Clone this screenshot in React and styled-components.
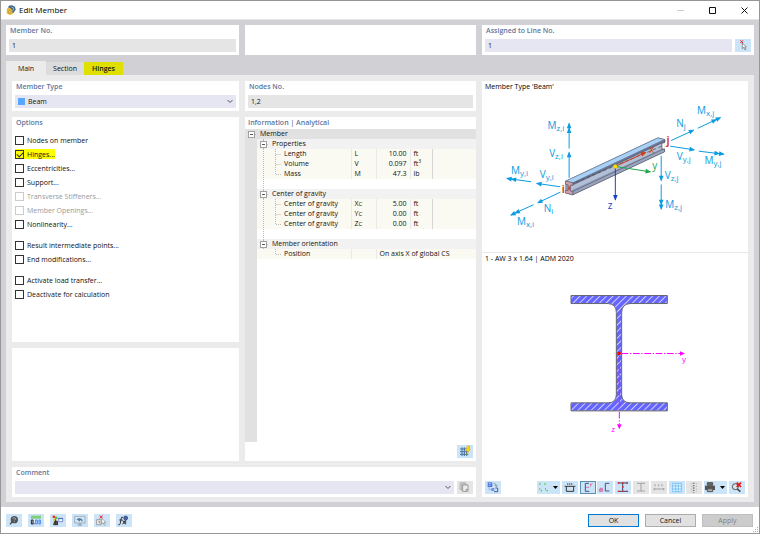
import React, { useState } from 'react';
import styled, { createGlobalStyle, css } from 'styled-components';

const GlobalStyle = createGlobalStyle`
    * {
        box-sizing: border-box;
    }
    body {
        margin: 0;
        background: white;
    }
    body, button, input, select, table {
        font-family: "Open Sans", "Noto Sans", sans-serif;
        font-size: 7px;
        font-weight: 500;
        color: #111111;
    }
`;

const Window = styled.div`
    display: flex;
    flex-direction: column;
    min-height: 100vh;
    border: 1px solid #969696;
    background: white;
`;

const TitleBar = styled.header`
    display: flex;
    align-items: center;
    height: 19px;
    padding: 0 5px;
    gap: 3px;
    border-bottom: 1px solid #e4e4e4;
`;

const Title = styled.h1`
    flex: 1;
    margin: 0;
    font-size: 8px;
    line-height: 10px;
    font-weight: 400;
    color: black;
`;

const WindowButton = styled.button`
    display: flex;
    justify-content: center;
    width: 29px;
    padding: 0;
    border: none;
    background: none;
    &:last-child {
        margin-right: -5px;
    }
`;

const Body = styled.main`
    display: flex;
    flex-direction: column;
    flex: 1;
    padding: 5px;
    background: #d0d0d5;
`;

const TopRow = styled.div`
    display: grid;
    grid-template-columns: 233fr 231fr 272fr;
    gap: 6px;
`;

const Card = styled.section`
    display: flex;
    flex-direction: column;
    min-width: 0;
    min-height: 30px;
    padding: 0 3px 3px 3px;
    background: white;
`;

const Caption = styled.label`
    display: block;
    height: 14px;
    line-height: 12px;
    margin: 0 0 0 ${props => props.$indent ? "3px" : "1px"};
    font-size: 7px;
    font-weight: 600;
    color: #62759c;
`;

const FieldRow = styled.div`
    display: flex;
    gap: 3px;
`;

const Field = styled.div`
    display: flex;
    align-items: center;
    flex: 1;
    min-width: 0;
    height: 13px;
    padding: 0 3px;
    gap: 3px;
    background: ${props => props.$locked ? "#e5e5e5" : "#e6e6f2"};
`;

const TextInput = styled.input`
    flex: 1;
    min-width: 0;
    padding: 0;
    border: none;
    outline-style: none;
    background: transparent;
`;

const Select = styled.select`
    flex: 1;
    min-width: 0;
    padding: 0;
    border: none;
    outline-style: none;
    appearance: none;
    background: transparent;
`;

const Swatch = styled.span`
    width: 7px;
    height: 7px;
    background: #55aaff;
`;

const PlainButton = styled.button`
    display: flex;
    padding: 0;
    border: none;
    background: none;
`;

const Tabs = styled.nav`
    display: flex;
    align-items: flex-end;
    height: 20px;
`;

const Tab = styled.button`
    height: ${props => props.$active ? "14px" : "13px"};
    padding: 0;
    width: ${props => props.$active ? "40px" : "38px"};
    border: none;
    background: ${props => props.$marked ? "#e0e000" : props.$active ? "#ebebeb" : "#dcdcdc"};
    ${props => props.$marked && css`
        width: 39px;
        font-weight: 600;
    `}
`;

const Panel = styled.div`
    display: grid;
    flex: 1;
    grid-template-columns: 227fr 231fr 266fr;
    grid-template-rows: 30px 225fr 113fr 30px;
    gap: 6px;
    padding: 6px 6px 5px;
    background: #ebebeb;
`;

const InfoCard = styled(Card)`
    grid-row: 2 / 4;
    grid-column: 2;
    padding: 0;
`;

const CommentCard = styled(Card)`
    grid-row: 4;
    grid-column: 1 / 3;
`;

const PreviewCard = styled(Card)`
    grid-row: 1 / 5;
    grid-column: 3;
    padding: 0;
`;

const OptionList = styled.div`
    display: flex;
    flex-direction: column;
    gap: 7px;
    padding-top: 2px;
`;

const OptionGroup = styled.div`
    display: flex;
    flex-direction: column;
    align-items: flex-start;
`;

const Option = styled.label`
    display: flex;
    align-items: center;
    height: 10px;
    margin: 2px 0;
    gap: 3px;
    color: ${props => props.$disabled ? "#999999" : "#111111"};
    background: ${props => props.$marked ? "#ffff00" : "transparent"};
`;

const CheckBox = styled.input`
    appearance: none;
    display: flex;
    justify-content: center;
    width: 9px;
    height: 9px;
    margin: 0;
    border: 1px solid #333333;
    &:disabled {
        border-color: #cccccc;
    }
    &:checked::after {
        content: "";
        width: 3px;
        height: 5px;
        border: solid #333333;
        border-width: 0 1px 1px 0;
        transform: rotate(45deg);
    }
`;

const TreeArea = styled.div`
    flex: 1;
    margin-top: -2px;
    background: linear-gradient(to right, #e1e1e1 12px, white 12px);
`;

const Tree = styled.table`
    width: 100%;
    table-layout: fixed;
    border-collapse: collapse;
    td, th {
        height: 10px;
        padding: 0;
        line-height: 10px;
        font-weight: 500;
        text-align: left;
        white-space: nowrap;
    }
`;

const RootRow = styled.tr`
    background: #e1e1e1;
`;

const GroupCell = styled.th`
    background: #f2f2f2;
`;

const NameCell = styled.th`
    background: #fafaf3;
`;

const ValueCell = styled.td`
    background: #fafaf3;
    border-left: ${props => props.$open ? "none" : "1px solid #e9e9e6"};
    ${props => props.$unit && css`
        border-right: 1px solid #d4d4d4;
    `}
`;

const CellText = styled.span`
    display: block;
    height: 10px;
    padding: 0 3px;
    text-align: ${props => props.$right ? "right" : "left"};
`;

const NameLine = styled.span`
    display: flex;
    align-items: center;
    height: 10px;
`;

const NameText = styled.span`
    padding-left: 3px;
`;

const Power = styled.sup`
    font-size: 5px;
    line-height: 0;
`;

const Small = styled.small`
    font-size: 6px;
`;

const Toggle = styled.button`
    display: flex;
    width: 12px;
    height: 10px;
    padding: 0;
    border: none;
    background: none;
`;

const InfoFooter = styled.div`
    display: flex;
    justify-content: flex-end;
    padding: 3px;
`;

const ToolButton = styled.button`
    display: flex;
    align-items: center;
    width: ${props => props.$menu ? "23px" : "16px"};
    height: 13px;
    padding: 0;
    border: none;
    background: ${props => props.disabled ? "#e5e5e5" : "#cce4f7"};
    ${props => props.$pressed && css`
        outline: 1px solid #5b8db5;
        outline-offset: -1px;
    `}
`;

const View = styled.div`
    display: flex;
    flex-direction: column;
    flex: ${props => props.$grow} 1 0;
    min-height: 0;
    & + & {
        border-top: 1px solid #e8e8e8;
    }
`;

const ViewTitle = styled.div`
    height: 12px;
    padding-left: 3px;
    line-height: 12px;
    color: black;
`;

const Drawing = styled.svg`
    flex: 1;
    width: 100%;
    min-height: 0;
    font-family: "Open Sans", "Noto Sans", sans-serif;
`;

const ViewTools = styled.div`
    display: flex;
    justify-content: space-between;
    padding: 3px;
`;

const ToolGroup = styled.div`
    display: flex;
    justify-content: space-between;
    width: 208px;
`;

const Footer = styled.footer`
    display: flex;
    align-items: center;
    justify-content: space-between;
    height: 26px;
    padding: 0 6px 0 5px;
`;

const FooterGroup = styled.div`
    display: flex;
    gap: 6px;
`;

const DialogButton = styled.button`
    width: 51px;
    height: 13px;
    padding: 0;
    border: 1px solid #adadad;
    background: #e1e1e1;
    ${props => props.$primary && css`
        border-color: #0078d7;
    `}
    &:disabled {
        border-color: #bfbfbf;
        background: #cccccc;
        color: #838383;
    }
`;

const Grip = styled.span`
    position: absolute;
    right: 1px;
    bottom: 1px;
    display: flex;
`;

// icons are drawn on a 48 x 39 grid
function Icon(props){
    return(
        <svg width="16" height="13" viewBox="0 0 48 39" fill="none" stroke="#333" strokeWidth="3" aria-hidden="true">
            {props.children}
        </svg>
    )
}

function Chevron(){
    return(
        <svg width="6" height="5" viewBox="0 0 6 5" fill="none" stroke="#555" aria-hidden="true">
            <path d="M0.5 1 L3 3.5 L5.5 1" />
        </svg>
    )
}

function DropArrow(){
    return(
        <svg width="5" height="3" viewBox="0 0 5 3" aria-hidden="true">
            <path d="M0 0 H5 L2.5 3 Z" fill="black" />
        </svg>
    )
}

function PlusMinus(props){
    return(
        <Toggle aria-label={"Collapse " + props.name}>
            <svg width="12" height="10" viewBox="0 0 12 10" fill="none" stroke="#a0a0a0">
                {props.root ? null : <path d="M6.5 0 V2 M6.5 9 V10" stroke="#bbb" />}
                <path d="M10 5.5 H11" stroke="#bbb" />
                <rect x="3.5" y="2.5" width="6" height="6" fill="white" />
                <path d="M5 5.5 H8" stroke="#555" />
            </svg>
        </Toggle>
    )
}

function Guide(props){
    return(
        <svg width="12" height="10" viewBox="0 0 12 10" fill="none" stroke="#bbb" strokeDasharray="1 1" aria-hidden="true">
            <path d={props.d} />
        </svg>
    )
}

const optionGroups = [
    [
        { name: "Nodes on member" },
        { name: "Hinges...", marked: true },
        { name: "Eccentricities..." },
        { name: "Support..." },
        { name: "Transverse Stiffeners...", disabled: true },
        { name: "Member Openings...", disabled: true },
        { name: "Nonlinearity..." },
    ],
    [
        { name: "Result intermediate points..." },
        { name: "End modifications..." },
    ],
    [
        { name: "Activate load transfer..." },
        { name: "Deactivate for calculation" },
    ],
];

const treeGroups = [
    {
        name: "Properties",
        rows: [
            { name: "Length", symbol: "L", value: "10.00", unit: "ft" },
            { name: "Volume", symbol: "V", value: "0.097", unit: "ft", power: "3" },
            { name: "Mass", symbol: "M", value: "47.3", unit: "lb" },
        ],
    },
    {
        name: "Center of gravity",
        rows: [
            { name: "Center of gravity", symbol: "X", sub: "C", value: "5.00", unit: "ft" },
            { name: "Center of gravity", symbol: "Y", sub: "C", value: "0.00", unit: "ft" },
            { name: "Center of gravity", symbol: "Z", sub: "C", value: "0.00", unit: "ft" },
        ],
    },
    {
        name: "Member orientation",
        rows: [
            { name: "Position", text: "On axis X of global CS" },
        ],
    },
];

function TreeGroup(props){
    const { group, last } = props;
    return(
        <>
            <tr>
                <td></td>
                <GroupCell colSpan="5">
                    <NameLine><PlusMinus name={group.name} /><NameText>{group.name}</NameText></NameLine>
                </GroupCell>
            </tr>
            {group.rows.map((row, i) => (
                <tr key={i}>
                    <td></td>
                    <NameCell>
                        <NameLine>
                            <Guide d={last ? "" : "M6.5 0 V10"} />
                            <Guide d={i === group.rows.length - 1 ? "M6.5 0 V5.5 H12" : "M6.5 0 V10 M6.5 5.5 H12"} />
                            <NameText>{row.name}</NameText>
                        </NameLine>
                    </NameCell>
                    <ValueCell><CellText>{row.symbol}{row.sub ? <Small>{row.sub}</Small> : null}</CellText></ValueCell>
                    {row.text ?
                        <ValueCell colSpan="3"><CellText>{row.text}</CellText></ValueCell>
                    :
                        <>
                            <ValueCell><CellText $right>{row.value}</CellText></ValueCell>
                            <ValueCell $unit><CellText>{row.unit}{row.power ? <Power>{row.power}</Power> : null}</CellText></ValueCell>
                            <ValueCell $open></ValueCell>
                        </>
                    }
                </tr>
            ))}
            {last ? null :
                <tr>
                    <td></td>
                    <td colSpan="5"><NameLine><Guide d="M6.5 0 V10" /></NameLine></td>
                </tr>
            }
        </>
    )
}

function Force(props){
    const { x1, y1, x2, y2, double: twice, color } = props;
    const angle = Math.atan2(y2 - y1, x2 - x1) * 180 / Math.PI;
    return(
        <g stroke={color || "#0a9be0"} fill={color || "#0a9be0"}>
            <line x1={x1} y1={y1} x2={x2} y2={y2} strokeWidth="3" />
            <g transform={`translate(${x2} ${y2}) rotate(${angle})`} stroke="none">
                <path d="M3 0 L-14 -7 V7 Z" />
                {twice ? <path d="M-11 0 L-28 -7 V7 Z" /> : null}
            </g>
        </g>
    )
}

function Symbol(props){
    return(
        <text x={props.x} y={props.y} fontSize="30" fill="#0a9be0">
            {props.name}<tspan fontSize="24" dy="6">{props.sub}</tspan>
        </text>
    )
}

function BeamDrawing(){
    return(
        <Drawing viewBox="6 9 798 477" role="img" aria-label="Beam with internal forces">
            <path d="M257 274 L534 144 L554 149 L554 185 L277 315 L257 309 Z" fill="#8f9fbd" stroke="#55566b" strokeWidth="2" />
            <path d="M257 274 L534 144 L554 149 L278 279 Z" fill="#a9d0f5" stroke="#66799b" strokeWidth="2" />
            <path d="M278 279 L554 149 V157 L278 287 Z" fill="#6c7795" />
            <path d="M272 290 L546 161 V177 L272 302 Z" fill="#b3bfd4" />
            <path d="M278 305 L554 176 V186 L278 315 Z" fill="#9aa5bd" stroke="#55566b" strokeWidth="2" />
            <path d="M272 286 L546 158" stroke="#5d6078" strokeWidth="2" fill="none" />
            <path d="M270 285 L548 168" stroke="#444" strokeWidth="2" strokeDasharray="11 7" fill="none" />
            <path d="M256 274 L278 279 V287 L271 286 V304 L278 306 V315 L256 310 V302 L264 303 V285 L256 283 Z" fill="#d5a0aa" stroke="#65586b" strokeWidth="2" />
            <path d="M555 149 V157 L546 161 V177 L555 178" stroke="#444" strokeWidth="2" fill="white" />
            <path d="M267 290 V300" stroke="#d8401c" strokeWidth="5" />
            <Force x1={406} y1={230} x2={497} y2={188} color="#cf3d17" />
            <Force x1={406} y1={230} x2={511} y2={246} color="#1fa64a" />
            <Force x1={406} y1={230} x2={406} y2={330} color="#1f3fc8" />
            <circle cx="406" cy="230" r="6" fill="#ffe000" stroke="#c9a400" />
            <Force x1={267} y1={264} x2={267} y2={188} />
            <Force x1={267} y1={176} x2={267} y2={101} double />
            <Force x1={240} y1={291} x2={170} y2={281} />
            <Force x1={153} y1={276} x2={80} y2={266} double />
            <Force x1={241} y1={307} x2={173} y2={339} />
            <Force x1={160} y1={345} x2={92} y2={376} double />
            <Force x1={574} y1={152} x2={641} y2={121} />
            <Force x1={654} y1={115} x2={722} y2={83} double />
            <Force x1={571} y1={169} x2={643} y2={180} />
            <Force x1={657} y1={184} x2={732} y2={193} double />
            <Force x1={544} y1={198} x2={544} y2={272} />
            <Force x1={544} y1={284} x2={544} y2={358} double />
            <Symbol x={202} y={118} name="M" sub="z,i" />
            <Symbol x={207} y={202} name="V" sub="z,i" />
            <Symbol x={92} y={254} name="M" sub="y,i" />
            <Symbol x={179} y={266} name="V" sub="y,i" />
            <Symbol x={191} y={366} name="N" sub="i" />
            <Symbol x={110} y={406} name="M" sub="x,i" />
            <Symbol x={589} y={111} name="N" sub="j" />
            <Symbol x={652} y={73} name="M" sub="x,j" />
            <Symbol x={591} y={211} name="V" sub="y,j" />
            <Symbol x={674} y={222} name="M" sub="y,j" />
            <Symbol x={555} y={269} name="V" sub="z,j" />
            <Symbol x={556} y={354} name="M" sub="z,j" />
            <g fontSize="30">
                <text x="245" y="310" fill="#d8401c" fontWeight="700">i</text>
                <text x="560" y="163" fill="#d8401c" fontWeight="700">j</text>
                <text x="507" y="189" fill="#cf3d17">x</text>
                <text x="517" y="239" fill="#1fa64a">y</text>
                <text x="383" y="357" fill="#1f3fc8">z</text>
            </g>
        </Drawing>
    )
}

function SectionDrawing(){
    return(
        <Drawing viewBox="6 45 798 639" role="img" aria-label="Cross-section AW 3 x 1.64">
            <defs>
                <pattern id="hatch" width="14" height="14" patternUnits="userSpaceOnUse" patternTransform="rotate(45)">
                    <rect width="14" height="14" fill="#6464ff" />
                    <rect width="3" height="14" fill="#d0d0ff" />
                </pattern>
            </defs>
            <path
                d="M273 136 H562 V160 H450 Q425 162 425 187 V433 Q425 457 450 458 H562 V482 H273 V458 H385 Q409 457 409 433 V187 Q409 162 385 160 H273 Z"
                fill="url(#hatch)" stroke="#66666e" strokeWidth="3"
            />
            <g stroke="#ff00ff" fill="#ff00ff">
                <path d="M425 310 H602" strokeDasharray="20 5 4 5" strokeWidth="3" />
                <path d="M418 315 V522" strokeDasharray="20 5 4 5" strokeWidth="3" />
                <path d="M600 303 V317 L615 310 Z M411 522 H425 L418 537 Z" stroke="none" />
            </g>
            <rect x="413" y="305" width="9" height="9" fill="#ff0000" />
            <text x="606" y="334" fontSize="24" fill="#ff00ff">y</text>
            <text x="394" y="544" fontSize="24" fill="#ff00ff">z</text>
        </Drawing>
    )
}

function OptionBox(props){
    const [checked, setChecked] = useState(Boolean(props.option.marked));
    return(
        <Option $marked={props.option.marked} $disabled={props.option.disabled}>
            <CheckBox type="checkbox" checked={checked} disabled={props.option.disabled} onChange={(e) => setChecked(e.target.checked)} />
            {props.option.name}
        </Option>
    )
}

function ViewToolbar(){
    return(
        <ViewTools>
            <ToolButton aria-label="Information about section">
                <Icon>
                    <rect x="8" y="4" width="14" height="14" fill="#4f74e0" stroke="none" />
                    <path d="M11 8 H19 M11 13 H17" stroke="#d5e2ff" strokeWidth="2" />
                    <path d="M12 18 V26 H20" stroke="#8aa0dd" strokeWidth="2" />
                    <path d="M26 7 Q34 7 34 15 M30 12 L34 17 L38 12" stroke="#777" strokeWidth="2" />
                    <path d="M19 21 H28 V30 H19 Z" fill="#6f93e5" stroke="none" />
                    <path d="M31 21 H38 V32 H27" stroke="#4a5d90" />
                </Icon>
            </ToolButton>
            <ToolGroup>
                <ToolButton $menu aria-label="Stress points">
                    <Icon>
                        <path d="M7 9 H11 M22 9 H26 M11 29 H15 M28 29 H32 M7 24 H10 M24 24 H27" stroke="#38cc38" strokeWidth="4" />
                    </Icon>
                    <DropArrow />
                </ToolButton>
                <ToolButton aria-label="Dimensions">
                    <Icon>
                        <path d="M8 16 H40" />
                        <path d="M15 9 H33" strokeWidth="5" strokeDasharray="4 2" stroke="#666" />
                        <path d="M13 18 V31 H35 V18" />
                    </Icon>
                </ToolButton>
                <ToolButton $pressed aria-label="Principal axes">
                    <Icon>
                        <path d="M27 7 H16 V31 H28" stroke="#45557c" />
                        <path d="M18 19 H28 M30 12 L38 7 M32 17 V8" stroke="#d24a8c" strokeWidth="2" />
                    </Icon>
                </ToolButton>
                <ToolButton aria-label="Shear center">
                    <Icon>
                        <path d="M37 7 H25 V30 H37" stroke="#45557c" />
                        <path d="M7 24 H17 V31 H7 Z M17 20 L12 28 M11 20 V31" stroke="#d24a8c" strokeWidth="2" />
                    </Icon>
                </ToolButton>
                <ToolButton aria-label="Section parts">
                    <Icon>
                        <path d="M10 6 H37 M10 31 H37 M23 6 V31" stroke="#37466e" />
                        <path d="M8 6 H13 M21 6 H26 M34 6 H39 M8 31 H13 M21 31 H26 M34 31 H39 M21 18 H26" stroke="#e02828" strokeWidth="4" />
                    </Icon>
                </ToolButton>
                <ToolButton disabled aria-label="Section outline">
                    <Icon><path d="M12 7 H36 M12 30 H36 M24 7 V30" stroke="#a2a2a2" /></Icon>
                </ToolButton>
                <ToolButton disabled aria-label="Numbering">
                    <Icon>
                        <path d="M8 24 H40 M10 21 V28 M38 21 V28" stroke="#a2a2a2" />
                        <path d="M12 10 V16 M23 10 V16 M33 10 V16" stroke="#999" />
                    </Icon>
                </ToolButton>
                <ToolButton aria-label="Grid">
                    <Icon>
                        <path d="M11 7 H37 V32 H11 Z M20 7 V32 M28 7 V32 M11 15 H37 M11 24 H37" stroke="#4db4f5" strokeWidth="2" fill="#e6f4ff" />
                    </Icon>
                </ToolButton>
                <ToolButton disabled aria-label="Fibers">
                    <Icon>
                        <path d="M23 5 V35" stroke="#777" strokeDasharray="4 3" strokeWidth="5" />
                        <path d="M16 7 V33 M31 7 V33" stroke="#a8a8a8" strokeDasharray="3 5" />
                    </Icon>
                </ToolButton>
                <ToolButton $menu aria-label="Print">
                    <Icon>
                        <path d="M10 5 H26 V13 H10 Z" fill="#666" stroke="#555" />
                        <path d="M3 14 H33 V27 H3 Z" fill="#555" stroke="none" />
                        <path d="M10 23 H26 V32 H10 Z" fill="#aaa" stroke="#555" />
                    </Icon>
                    <DropArrow />
                </ToolButton>
                <ToolButton aria-label="Reset view">
                    <Icon>
                        <circle cx="19" cy="17" r="9" stroke="#555" fill="#d8e4ee" />
                        <path d="M25 24 L34 32" stroke="#444" strokeWidth="5" />
                        <path d="M23 5 L36 18 M36 5 L23 18" stroke="#ee1111" strokeWidth="5" />
                    </Icon>
                </ToolButton>
            </ToolGroup>
        </ViewTools>
    )
}

function App(){
    const [comment, setComment] = useState("");

    return(
        <Window>
            <GlobalStyle />
            <TitleBar>
                <svg width="10" height="12" viewBox="0 0 30 36" aria-hidden="true">
                    <path d="M6 9 Q10 2 18 4 L27 8 L29 17 L22 27 L16 28 L12 16 Z" fill="#43678a" />
                    <path d="M16 9 L23 12 L21 20" stroke="#8fb2cf" strokeWidth="3" fill="none" />
                    <path d="M3 13 L12 11 L19 19 L20 30 L11 33 L2 28 Z" fill="#e8b92c" />
                    <circle cx="11" cy="23" r="4" fill="#f9e08a" stroke="#9c7a14" strokeWidth="2" />
                </svg>
                <Title>Edit Member</Title>
                <WindowButton aria-label="Minimize" disabled>
                    <svg width="7" height="7" viewBox="0 0 7 7"><path d="M0 3.5 H7" stroke="#ccc" /></svg>
                </WindowButton>
                <WindowButton aria-label="Maximize">
                    <svg width="7" height="7" viewBox="0 0 7 7"><path d="M0.5 0.5 H6.5 V6.5 H0.5 Z" fill="none" stroke="#111" /></svg>
                </WindowButton>
                <WindowButton aria-label="Close">
                    <svg width="7" height="7" viewBox="0 0 7 7"><path d="M0.5 0.5 L6.5 6.5 M6.5 0.5 L0.5 6.5" stroke="#111" /></svg>
                </WindowButton>
            </TitleBar>
            <Body>
                <TopRow>
                    <Card>
                        <Caption htmlFor="member-no">Member No.</Caption>
                        <Field $locked><TextInput id="member-no" readOnly value="1" /></Field>
                    </Card>
                    <Card />
                    <Card>
                        <Caption htmlFor="line-no">Assigned to Line No.</Caption>
                        <FieldRow>
                            <Field><TextInput id="line-no" defaultValue="1" /></Field>
                            <ToolButton aria-label="Select line">
                                <Icon>
                                    <path d="M16 4 L24 12 M24 4 L16 12" stroke="#dd2233" />
                                    <path d="M22 12 V29 L26 25 L30 33 L33 31 L29 24 H34 Z" fill="white" stroke="#666" strokeWidth="2" />
                                </Icon>
                            </ToolButton>
                        </FieldRow>
                    </Card>
                </TopRow>
                <Tabs>
                    <Tab $active>Main</Tab>
                    <Tab>Section</Tab>
                    <Tab $marked>Hinges</Tab>
                </Tabs>
                <Panel>
                    <Card>
                        <Caption htmlFor="member-type">Member Type</Caption>
                        <Field>
                            <Swatch />
                            <Select id="member-type"><option>Beam</option></Select>
                            <Chevron />
                        </Field>
                    </Card>
                    <Card>
                        <Caption htmlFor="nodes-no">Nodes No.</Caption>
                        <Field $locked><TextInput id="nodes-no" readOnly value="1,2" /></Field>
                    </Card>
                    <Card>
                        <Caption as="h2">Options</Caption>
                        <OptionList>
                            {optionGroups.map((group, i) => (
                                <OptionGroup key={i}>
                                    {group.map((option) => <OptionBox key={option.name} option={option} />)}
                                </OptionGroup>
                            ))}
                        </OptionList>
                    </Card>
                    <InfoCard>
                        <Caption as="h2" $indent>Information | Analytical</Caption>
                        <TreeArea>
                            <Tree>
                                <colgroup>
                                    <col width="12" />
                                    <col width="94" />
                                    <col width="25" />
                                    <col width="34" />
                                    <col width="22" />
                                    <col />
                                </colgroup>
                                <tbody>
                                    <RootRow>
                                        <th><PlusMinus root name="Member" /></th>
                                        <th colSpan="5"><NameText>Member</NameText></th>
                                    </RootRow>
                                    {treeGroups.map((group, i) => (
                                        <TreeGroup key={group.name} group={group} last={i === treeGroups.length - 1} />
                                    ))}
                                </tbody>
                            </Tree>
                        </TreeArea>
                        <InfoFooter>
                            <ToolButton aria-label="Table settings">
                                <Icon>
                                    <path d="M9 12 H30 M9 20 H34 M9 28 H34 M15 7 V33 M22 7 V33 M29 18 V33" stroke="#4672a0" />
                                    <path d="M30 3 H39 L36 12 H40 L29 29 L31 17 H27 Z" fill="#ffd21e" stroke="#c89600" strokeWidth="1" />
                                </Icon>
                            </ToolButton>
                        </InfoFooter>
                    </InfoCard>
                    <Card />
                    <CommentCard>
                        <Caption htmlFor="comment">Comment</Caption>
                        <FieldRow>
                            <Field>
                                <TextInput id="comment" value={comment} onChange={(e) => setComment(e.target.value)} />
                                <PlainButton aria-label="Show comments"><Chevron /></PlainButton>
                            </Field>
                            <ToolButton disabled aria-label="Copy comment">
                                <Icon>
                                    <path d="M9 5 H25 V9 H13 V25 H9 Z M13 9 H29 V13 M13 9 V28 H17" stroke="#a5a5a5" strokeWidth="2" />
                                    <path d="M17 12 H33 V31 H17 Z M27 31 V25 H33" stroke="#999" fill="#eee" />
                                </Icon>
                            </ToolButton>
                        </FieldRow>
                    </CommentCard>
                    <PreviewCard>
                        <View $grow={171}>
                            <ViewTitle>Member Type 'Beam'</ViewTitle>
                            <BeamDrawing />
                        </View>
                        <View $grow={245}>
                            <ViewTitle>1 - AW 3 x 1.64 | ADM 2020</ViewTitle>
                            <SectionDrawing />
                            <ViewToolbar />
                        </View>
                    </PreviewCard>
                </Panel>
            </Body>
            <Footer>
                <FooterGroup>
                    <ToolButton aria-label="Help">
                        <Icon>
                            <circle cx="25" cy="17" r="11" fill="#555" stroke="none" />
                            <path d="M19 23 L12 31" stroke="#444" strokeWidth="4" />
                            <path d="M21 14 Q22 10 26 11 Q30 13 27 17 L25 19 M25 22 V24" stroke="#cce4f7" strokeWidth="2" />
                        </Icon>
                    </ToolButton>
                    <ToolButton aria-label="Units and decimal places">
                        <Icon>
                            <rect x="9" y="5" width="30" height="9" fill="#7fce78" stroke="none" />
                            <path d="M10 18 H15 V30 H10 Z M18 31 V28" stroke="#222" />
                            <path d="M23 18 H28 V30 H23 Z M33 18 H37 V30 H33 Z" stroke="#4a86ee" />
                        </Icon>
                    </ToolButton>
                    <ToolButton aria-label="Display properties">
                        <Icon>
                            <path d="M8 5 H15 V12 H8 Z" fill="#dd3322" stroke="none" />
                            <path d="M15 8 H22 V15 H15 Z" fill="#55bb33" stroke="none" />
                            <path d="M9 14 H15 V20 H9 Z" fill="#eec400" stroke="none" />
                            <path d="M17 16 V31 M11 32 L14 22 L22 22 L23 32 Z" fill="#555" />
                            <path d="M26 13 H38 V23 H26 Z" fill="white" stroke="#4967b8" strokeWidth="2" />
                            <path d="M24 14 H39" stroke="#4967b8" />
                        </Icon>
                    </ToolButton>
                    <ToolButton aria-label="View settings">
                        <Icon>
                            <path d="M8 7 H39 V27 H8 Z" stroke="#8095aa" strokeWidth="2" fill="#d5e7f5" />
                            <path d="M17 33 H30 M24 27 V33" stroke="#8095aa" />
                            <path d="M13 18 Q21 6 32 17 L31 24 L26 18 L21 23 L18 18 Z" fill="#5080a0" stroke="none" />
                        </Icon>
                    </ToolButton>
                    <ToolButton aria-label="Deselect">
                        <Icon>
                            <path d="M17 5 L26 13 M26 5 L17 13" stroke="#ee2233" />
                            <path d="M8 17 H21 V32 H8 Z" fill="#f5f5f5" stroke="#777" strokeWidth="2" />
                            <path d="M13 22 H16 V28" stroke="#555" strokeWidth="2" />
                            <path d="M23 13 V30 L27 26 L31 34 L34 32 L30 25 H36 Z" fill="white" stroke="#888" strokeWidth="2" />
                        </Icon>
                    </ToolButton>
                    <ToolButton aria-label="Formula">
                        <Icon>
                            <path d="M21 10 Q16 7 15 15 L13 28 Q12 34 7 32 M10 18 H20" />
                            <path d="M20 19 L28 31 M28 19 L20 31" />
                            <circle cx="29" cy="12" r="6" fill="#4a5fa8" stroke="#33406e" strokeWidth="2" />
                            <path d="M29 18 V30" stroke="#33406e" />
                        </Icon>
                    </ToolButton>
                </FooterGroup>
                <FooterGroup>
                    <DialogButton $primary>OK</DialogButton>
                    <DialogButton>Cancel</DialogButton>
                    <DialogButton disabled>Apply</DialogButton>
                </FooterGroup>
                <Grip>
                    <svg width="6" height="6" viewBox="0 0 6 6" aria-hidden="true">
                        <path d="M4 0 H5 V1 H4 Z M2 2 H3 V3 H2 Z M4 2 H5 V3 H4 Z M0 4 H1 V5 H0 Z M2 4 H3 V5 H2 Z M4 4 H5 V5 H4 Z" fill="#aaa" />
                    </svg>
                </Grip>
            </Footer>
        </Window>
    )
}

export default App;
